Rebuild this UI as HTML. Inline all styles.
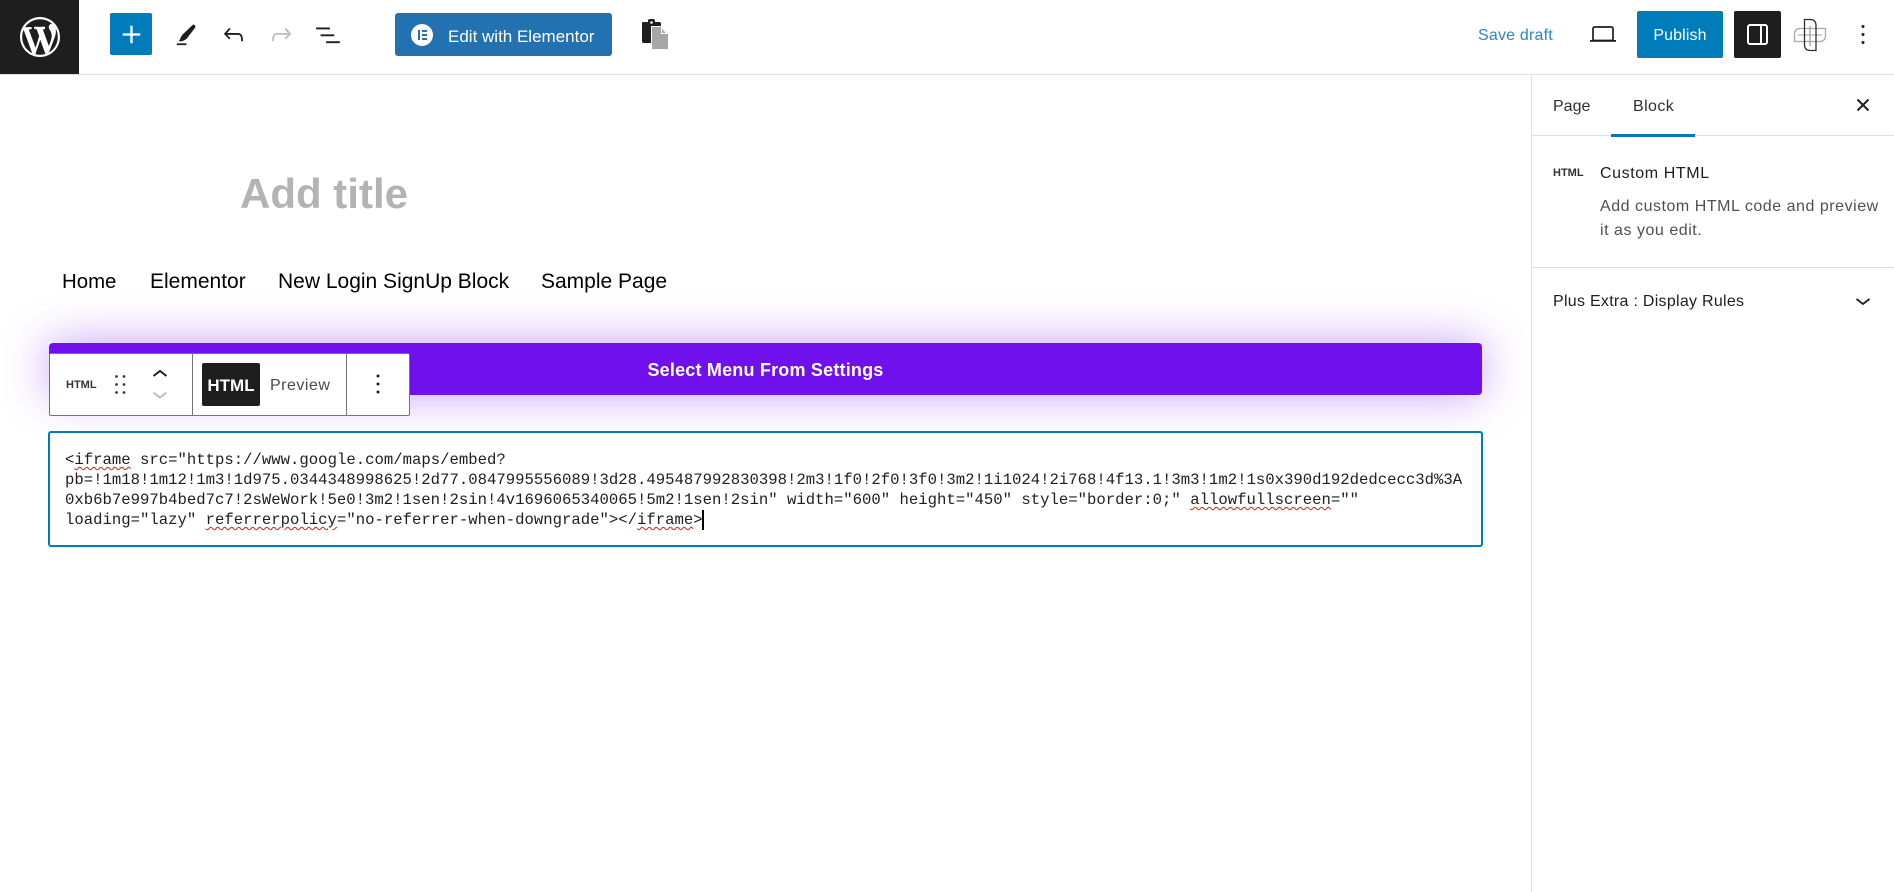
<!DOCTYPE html>
<html lang="en"><head><meta charset="utf-8"><title>Edit Page</title>
<style>
html,body{margin:0;padding:0;background:#fff;}
body{width:1894px;height:892px;position:relative;overflow:hidden;font-family:"Liberation Sans",sans-serif;color:#1e1e1e;}
.a{position:absolute;}
svg{position:absolute;display:block;}
.t{position:absolute;white-space:nowrap;}
.ui{font-size:16px;line-height:20px;}
.code{position:absolute;left:65px;white-space:pre;font-family:"Liberation Mono",monospace;font-size:15.63px;line-height:20px;color:#1e1e1e;}
.sp{text-decoration:underline wavy #e01b1b 1px;text-underline-offset:2px;}
</style></head><body>

<!-- top bar -->
<div class="a" style="left:0;top:74px;width:1894px;height:1px;background:#e0e0e0"></div>
<div class="a" style="left:0;top:0;width:79px;height:74px;background:#1e1e1e"></div>
<svg style="left:19.500px;top:16.500px" width="40" height="40" viewBox="0 0 20 20" fill="#fff"><path d="M20 10c0-5.51-4.49-10-10-10C4.48 0 0 4.49 0 10c0 5.52 4.48 10 10 10 5.51 0 10-4.48 10-10zM7.78 15.37L4.37 6.22c.55-.02 1.17-.08 1.17-.08.5-.06.44-1.13-.06-1.11 0 0-1.45.11-2.37.11-.18 0-.37 0-.58-.01C4.12 2.69 6.87 1.11 10 1.11c2.33 0 4.45.87 6.05 2.34-.68-.11-1.65.39-1.65 1.58 0 .74.45 1.36.9 2.1.35.61.55 1.36.55 2.46 0 1.49-1.4 5-1.4 5l-3.03-8.37c.54-.02.82-.17.82-.17.5-.05.44-1.25-.06-1.22 0 0-1.44.12-2.38.12-.87 0-2.33-.12-2.33-.12-.5-.03-.56 1.2-.06 1.22l.92.08 1.26 3.41zM17.41 10c.24-.64.74-1.87.43-4.25.7 1.29 1.05 2.71 1.05 4.25 0 3.29-1.73 6.24-4.4 7.78.97-2.59 1.94-5.2 2.92-7.78zM6.1 18.09C3.12 16.65 1.11 13.53 1.11 10c0-1.3.23-2.48.72-3.59C3.25 10.3 4.67 14.2 6.1 18.09zm4.03-6.63l2.58 6.98c-.86.29-1.76.45-2.71.45-.79 0-1.57-.11-2.29-.33.81-2.38 1.62-4.74 2.42-7.1z"/></svg>

<div class="a" style="left:110px;top:13px;width:42px;height:42px;background:#007cba;border-radius:2px"></div>
<svg style="left:114px;top:17px" width="35" height="35" viewBox="0 0 24 24" fill="#fff"><path d="M18 11.2h-5.2V6h-1.6v5.2H6v1.6h5.2V18h1.6v-5.2H18z"/></svg>

<svg style="left:172px;top:21px" width="29" height="29" viewBox="0 0 24 24" fill="#1e1e1e"><path d="M4 20h8v-1.5H4V20zM18.9 3.5c-.6-.6-1.5-.6-2.1 0L9 11l-1.200 1.500c-.5.7-.9 2-1.300 2.800l-1 1.700 1.800-.2c1.500-.2 2.800-.7 3.700-1.300l1.300-1L19 5.700c.5-.6.5-1.600-.1-2.200z"/></svg>
<svg style="left:219px;top:20px" width="29" height="29" viewBox="0 0 24 24" fill="#1e1e1e"><path d="M18.300 11.700c-.6-.6-1.400-.9-2.300-.9H6.700l2.900-3.300-1.100-1-4.500 5L8.500 16l1-1-2.700-2.700H16c.5 0 .9.200 1.300.5 1 1 1 3.400 1 4.500v.3h1.500v-.2c0-1.500 0-4.300-1.500-5.700z"/></svg>
<svg style="left:267px;top:20px" width="29" height="29" viewBox="0 0 24 24" fill="#bdbdbd"><path d="M15.600 6.500l-1.100 1 2.900 3.300H8c-.9 0-1.700.3-2.300.9-1.400 1.500-1.400 4.200-1.400 5.600v.2h1.500v-.3c0-1.100 0-3.500 1-4.500.3-.3.7-.5 1.300-.5h9.200L14.500 15l1.100 1.100 4.600-4.600-4.600-5z"/></svg>
<svg style="left:313px;top:20px" width="30" height="30" viewBox="0 0 24 24" fill="#1e1e1e"><path d="M2.500 6h11v1.500h-11V6zm3.500 5.500h11V13H6v-1.500zM21.500 17h-11v1.500h11V17z"/></svg>

<!-- Edit with Elementor -->
<div class="a" style="left:395px;top:13px;width:217px;height:43px;background:#2271b1;border-radius:3px"></div>
<div class="a" style="left:411px;top:23.500px;width:22px;height:22px;background:#fff;border-radius:50%"></div>
<div class="a" style="left:418px;top:29.500px;width:2px;height:10px;background:#2271b1"></div>
<div class="a" style="left:422px;top:29.500px;width:5px;height:2px;background:#2271b1"></div>
<div class="a" style="left:422px;top:33.500px;width:5px;height:2px;background:#2271b1"></div>
<div class="a" style="left:422px;top:37.500px;width:5px;height:2px;background:#2271b1"></div>
<div class="t" style="left:448px;top:26.500px;color:#fff;font-size:17px;line-height:20px">Edit with Elementor</div>

<!-- clipboard icon -->
<svg style="left:640px;top:18px" width="32" height="32" viewBox="0 0 32 32"><path d="M3 4h5V2.500C8 1.500 9 1 10 1h3c1 0 2 .5 2 1.500V4h4.500c.8 0 1.500.7 1.500 1.500V25H3.500C2.700 25 2 24.300 2 23.500V5c0-.6.4-1 1-1z" fill="#1e1e1e"/><circle cx="11.500" cy="4.500" r="1.300" fill="#fff"/><path d="M11.500 8.500h10l7 7V31.500h-17z" fill="#a6a6a6" stroke="#fff" stroke-width="1"/><path d="M21 8.500v7.500h7.500z" fill="#fff"/><path d="M22 11v4h4z" fill="#a6a6a6"/></svg>

<div class="t ui" style="left:1478px;top:25.500px;color:#2b86c4;letter-spacing:.2px">Save draft</div>
<svg style="left:1586px;top:17px" width="34" height="34" viewBox="0 0 34 34"><rect x="7" y="10" width="20" height="13.500" rx="1.500" fill="none" stroke="#1e1e1e" stroke-width="1.700"/><rect x="4" y="23" width="26" height="1.800" fill="#1e1e1e"/></svg>

<div class="a" style="left:1637px;top:11px;width:86px;height:47px;background:#007cba;border-radius:2px"></div>
<div class="t" style="left:1637px;top:25.500px;width:86px;text-align:center;color:#fff;font-size:16px;line-height:20px;letter-spacing:.1px">Publish</div>

<div class="a" style="left:1734px;top:11px;width:47px;height:47px;background:#1e1e1e;border-radius:2px"></div>
<svg style="left:1734px;top:11px" width="47" height="47" viewBox="0 0 47 47" fill="none" stroke="#fff" stroke-width="2"><rect x="14" y="14" width="19" height="19" rx="2"/><path d="M27 14v19"/></svg>

<!-- plugin icon -->
<svg style="left:1792px;top:17px" width="36" height="36" viewBox="0 0 36 36" fill="none"><path d="M8 11.500H33.500V18Q33.500 24.500 27.500 24.500H2.500V17.500Q2.500 11.500 8 11.500Z" stroke="#a8a8a8" stroke-width="1.300"/><path d="M6 18H30" stroke="#b5b5b5" stroke-width="1.200"/><path d="M12.500 2.500H18Q24 2.500 24 8.500V33.500H18.500Q12.500 33.500 12.500 27.500Z" stroke="#2e2e2e" stroke-width="1.300"/><path d="M18 9V29" stroke="#9a9a9a" stroke-width="1.200"/></svg>

<svg style="left:1851px;top:23px" width="24" height="24" viewBox="0 0 24 24" fill="#1e1e1e"><circle cx="12" cy="3.500" r="1.500"/><circle cx="12" cy="11.500" r="1.500"/><circle cx="12" cy="19.500" r="1.500"/></svg>

<!-- sidebar -->
<div class="a" style="left:1531px;top:75px;width:1px;height:817px;background:#e0e0e0"></div>
<div class="a" style="left:1532px;top:135px;width:362px;height:1px;background:#e0e0e0"></div>
<div class="a" style="left:1611px;top:134px;width:84px;height:3px;background:#007cba"></div>
<div class="t ui" style="left:1553px;top:96.500px;color:#2f2f2f">Page</div>
<div class="t ui" style="left:1633px;top:96.500px;color:#2f2f2f;letter-spacing:.4px">Block</div>
<svg style="left:1851px;top:93px" width="24" height="24" viewBox="0 0 24 24" fill="none" stroke="#1e1e1e" stroke-width="2"><path d="M6.500 6.500L17.500 17.500M17.500 6.500L6.500 17.500"/></svg>

<div class="t" style="left:1553px;top:165.500px;font-size:11px;line-height:14px;font-weight:bold;color:#333">HTML</div>
<div class="t ui" style="left:1600px;top:163.500px;color:#1e1e1e;letter-spacing:.6px">Custom HTML</div>
<div class="t ui" style="left:1600px;top:196.500px;color:#505050;letter-spacing:.53px">Add custom HTML code and preview</div>
<div class="t ui" style="left:1600px;top:220.500px;color:#505050;letter-spacing:.53px">it as you edit.</div>
<div class="a" style="left:1532px;top:267px;width:362px;height:1px;background:#e0e0e0"></div>
<div class="t ui" style="left:1553px;top:291.500px;color:#1e1e1e;letter-spacing:.28px">Plus Extra : Display Rules</div>
<svg style="left:1851px;top:289px" width="24" height="24" viewBox="0 0 24 24" fill="none" stroke="#1e1e1e" stroke-width="1.800"><path d="M5.500 10L12 15L18.500 10"/></svg>

<!-- canvas -->
<div class="t" style="left:240px;top:168.500px;font-size:42px;line-height:50px;font-weight:bold;color:#b3b3b3">Add title</div>
<div class="t" style="left:62px;top:270px;font-size:20.400px;line-height:24px;color:#000">Home</div>
<div class="t" style="left:150px;top:270px;font-size:21px;line-height:24px;color:#000">Elementor</div>
<div class="t" style="left:278px;top:270px;font-size:21px;line-height:24px;color:#000">New Login SignUp Block</div>
<div class="t" style="left:541px;top:270px;font-size:21px;line-height:24px;color:#000">Sample Page</div>

<!-- purple menu bar -->
<div class="a" style="left:49px;top:343px;width:1433px;height:52px;background:#7010ec;border-radius:4px;box-shadow:0 0 46px rgba(115,19,245,.42)"></div>
<div class="t" style="left:49px;top:359px;width:1433px;text-align:center;color:#fff;font-size:18px;line-height:22px;font-weight:bold;letter-spacing:.2px">Select Menu From Settings</div>

<!-- block toolbar -->
<div class="a" style="left:49px;top:353px;width:359px;height:61px;background:#fff;border:1px solid #757575;border-radius:2px"></div>
<div class="a" style="left:192px;top:353px;width:1px;height:62px;background:#757575"></div>
<div class="a" style="left:346px;top:353px;width:1px;height:62px;background:#757575"></div>
<div class="t" style="left:66px;top:378px;font-size:11px;line-height:14px;font-weight:bold;color:#333">HTML</div>
<svg style="left:108px;top:374px" width="24" height="24" viewBox="0 0 24 24" fill="#3a3a3a"><circle cx="8.500" cy="2.500" r="1.400"/><circle cx="16" cy="2.500" r="1.400"/><circle cx="8.500" cy="10.500" r="1.400"/><circle cx="16" cy="10.500" r="1.400"/><circle cx="8.500" cy="18.500" r="1.400"/><circle cx="16" cy="18.500" r="1.400"/></svg>
<svg style="left:148px;top:362px" width="24" height="24" viewBox="0 0 24 24" fill="none" stroke="#1e1e1e" stroke-width="2"><path d="M5.500 14L12 9L18.500 14"/></svg>
<svg style="left:148px;top:381px" width="24" height="24" viewBox="0 0 24 24" fill="none" stroke="#bdbdbd" stroke-width="2"><path d="M5.500 11.500L12 16.500L18.500 11.500"/></svg>
<div class="a" style="left:202px;top:363px;width:58px;height:43px;background:#1e1e1e;border-radius:2px"></div>
<div class="t" style="left:202px;top:375.500px;width:58px;text-align:center;color:#fff;font-size:17px;line-height:20px;font-weight:bold">HTML</div>
<div class="t" style="left:270px;top:375.500px;color:#4a4a4a;font-size:16px;line-height:20px;letter-spacing:.5px">Preview</div>
<svg style="left:366px;top:372px" width="24" height="24" viewBox="0 0 24 24" fill="#1e1e1e"><circle cx="12" cy="4" r="1.500"/><circle cx="12" cy="12" r="1.500"/><circle cx="12" cy="20" r="1.500"/></svg>

<!-- textarea -->
<div class="a" style="left:48px;top:431px;width:1431px;height:112px;background:#fff;border:2px solid #007cba;border-radius:3px"></div>
<div class="code" style="top:450px">&lt;<span class="sp">iframe</span> src="https://www.google.com/maps/embed?</div>
<div class="code" style="top:470px">pb=!1m18!1m12!1m3!1d975.0344348998625!2d77.0847995556089!3d28.495487992830398!2m3!1f0!2f0!3f0!3m2!1i1024!2i768!4f13.1!3m3!1m2!1s0x390d192dedcecc3d%3A</div>
<div class="code" style="top:490px">0xb6b7e997b4bed7c7!2sWeWork!5e0!3m2!1sen!2sin!4v1696065340065!5m2!1sen!2sin" width="600" height="450" style="border:0;" <span class="sp">allowfullscreen</span>=""</div>
<div class="code" style="top:510px">loading="lazy" <span class="sp">referrerpolicy</span>="no-referrer-when-downgrade"&gt;&lt;/<span class="sp">iframe</span>&gt;</div>
<div class="a" style="left:702px;top:510px;width:2px;height:20px;background:#000"></div>

</body></html>
